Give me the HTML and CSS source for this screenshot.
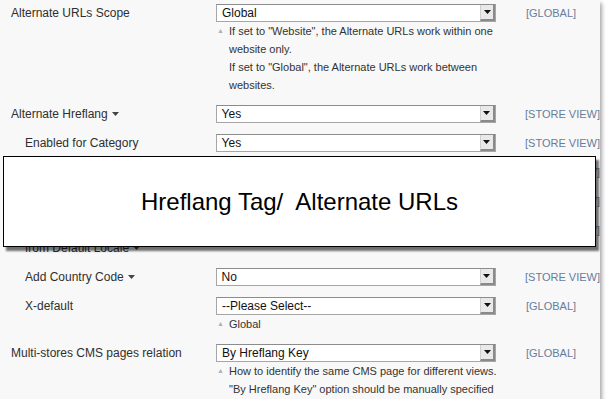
FILE: index.html
```html
<!DOCTYPE html>
<html>
<head>
<meta charset="utf-8">
<link rel="stylesheet" href="styles.css">
</head>
<body>
<div class="panel">
  <div class="row">
    <div class="label">Alternate URLs Scope</div>
    <div class="value">
      <div class="select"><span class="sel-text">Global</span><span class="sel-btn"><svg width="7" height="4" viewBox="0 0 7 4"><path d="M0 0H7L3.5 4Z" fill="#111"/></svg></span></div>
      <div class="note"><span class="tri">&#9650;</span><span>If set to "Website", the Alternate URLs work within one website only.<br>If set to "Global", the Alternate URLs work between websites.</span></div>
    </div>
    <div class="scope">[GLOBAL]</div>
  </div>
  <div class="row">
    <div class="label">Alternate Hreflang <svg class="caret" width="7" height="4" viewBox="0 0 7 4"><path d="M0 0H7L3.5 4Z" fill="#444"/></svg></div>
    <div class="value">
      <div class="select"><span class="sel-text">Yes</span><span class="sel-btn"><svg width="7" height="4" viewBox="0 0 7 4"><path d="M0 0H7L3.5 4Z" fill="#111"/></svg></span></div>
    </div>
    <div class="scope">[STORE VIEW]</div>
  </div>
  <div class="row">
    <div class="label sub">Enabled for Category</div>
    <div class="value">
      <div class="select"><span class="sel-text">Yes</span><span class="sel-btn"><svg width="7" height="4" viewBox="0 0 7 4"><path d="M0 0H7L3.5 4Z" fill="#111"/></svg></span></div>
    </div>
    <div class="scope">[STORE VIEW]</div>
  </div>
  <div class="row">
    <div class="label sub">Enabled for Product</div>
    <div class="value">
      <div class="select"><span class="sel-text">Yes</span><span class="sel-btn"><svg width="7" height="4" viewBox="0 0 7 4"><path d="M0 0H7L3.5 4Z" fill="#111"/></svg></span></div>
    </div>
    <div class="scope">[STORE VIEW]</div>
  </div>
  <div class="row">
    <div class="label sub">Enabled for CMS Page</div>
    <div class="value">
      <div class="select"><span class="sel-text">Yes</span><span class="sel-btn"><svg width="7" height="4" viewBox="0 0 7 4"><path d="M0 0H7L3.5 4Z" fill="#111"/></svg></span></div>
    </div>
    <div class="scope">[STORE VIEW]</div>
  </div>
  <div class="row">
    <div class="label sub">Use Language Code<br>from Default Locale <svg class="caret" width="7" height="4" viewBox="0 0 7 4"><path d="M0 0H7L3.5 4Z" fill="#444"/></svg></div>
    <div class="value">
      <div class="select"><span class="sel-text">Yes</span><span class="sel-btn"><svg width="7" height="4" viewBox="0 0 7 4"><path d="M0 0H7L3.5 4Z" fill="#111"/></svg></span></div>
    </div>
    <div class="scope">[STORE VIEW]</div>
  </div>
  <div class="row">
    <div class="label sub">Add Country Code <svg class="caret" width="7" height="4" viewBox="0 0 7 4"><path d="M0 0H7L3.5 4Z" fill="#444"/></svg></div>
    <div class="value">
      <div class="select"><span class="sel-text">No</span><span class="sel-btn"><svg width="7" height="4" viewBox="0 0 7 4"><path d="M0 0H7L3.5 4Z" fill="#111"/></svg></span></div>
    </div>
    <div class="scope">[STORE VIEW]</div>
  </div>
  <div class="row">
    <div class="label sub">X-default</div>
    <div class="value">
      <div class="select"><span class="sel-text">--Please Select--</span><span class="sel-btn"><svg width="7" height="4" viewBox="0 0 7 4"><path d="M0 0H7L3.5 4Z" fill="#111"/></svg></span></div>
      <div class="note"><span class="tri">&#9650;</span><span>Global</span></div>
    </div>
    <div class="scope">[GLOBAL]</div>
  </div>
  <div class="row">
    <div class="label">Multi-stores CMS pages relation</div>
    <div class="value">
      <div class="select"><span class="sel-text">By Hreflang Key</span><span class="sel-btn"><svg width="7" height="4" viewBox="0 0 7 4"><path d="M0 0H7L3.5 4Z" fill="#111"/></svg></span></div>
      <div class="note"><span class="tri">&#9650;</span><span>How to identify the same CMS page for different views.<br>"By Hreflang Key" option should be manually specified</span></div>
    </div>
    <div class="scope">[GLOBAL]</div>
  </div>
  <div class="overlay">Hreflang Tag/  Alternate URLs</div>
</div>
</body>
</html>
```
FILE: styles.css
```css
html, body {
  margin: 0;
  padding: 0;
  background: #ffffff;
}
body {
  font-family: "Liberation Sans", Arial, Helvetica, sans-serif;
  color: #2e2e2e;
}
.panel {
  position: relative;
  width: 600px;
  height: 399px;
  overflow: hidden;
  background: #f8f8f8;
  box-shadow: 2px 3px 4px rgba(0, 0, 0, 0.35);
}
.row {
  display: flex;
  align-items: flex-start;
  padding: 4px 0 7px 0;
}
.label {
  width: 205px;
  padding-left: 11px;
  font-size: 12px;
  line-height: 18px;
  color: #2f2f2f;
}
.label.sub {
  width: 191px;
  padding-left: 25px;
}
.caret {
  vertical-align: middle;
  margin-left: 1px;
  position: relative;
  top: -1px;
}
.value {
  width: 281px;
}
.select {
  box-sizing: border-box;
  height: 18px;
  width: 280px;
  background: #ffffff;
  border: 1px solid #a6a6a6;
  border-top-color: #8c8c8c;
  display: flex;
  align-items: center;
  justify-content: space-between;
}
.sel-text {
  font-size: 12px;
  padding-left: 5px;
  color: #111;
  white-space: nowrap;
}
.sel-btn {
  box-sizing: border-box;
  width: 15px;
  height: 16px;
  background: #e9e9e9;
  border-left: 1px solid #d0d0d0;
  border-right: 2px solid #8a8a8a;
  border-bottom: 2px solid #8a8a8a;
  display: flex;
  align-items: center;
  justify-content: center;
}
.note {
  display: flex;
  font-size: 11px;
  line-height: 18px;
  color: #333;
  padding-left: 1px;
}
.tri {
  width: 12px;
  flex: none;
  color: #aab3bb;
  font-size: 7px;
}
.scope {
  padding-left: 29px;
  font-size: 11px;
  line-height: 18px;
  color: #667d9c;
  white-space: nowrap;
}
.overlay {
  position: absolute;
  left: 3px;
  top: 156px;
  width: 591px;
  height: 89px;
  box-sizing: content-box;
  padding-top: 0;
  background: #ffffff;
  border: 1px solid #000;
  box-shadow: 3px 4px 2px rgba(0, 0, 0, 0.55);
  display: flex;
  align-items: center;
  justify-content: center;
  font-size: 24px;
  line-height: 30px;
  color: #000;
  white-space: pre;
}
```
